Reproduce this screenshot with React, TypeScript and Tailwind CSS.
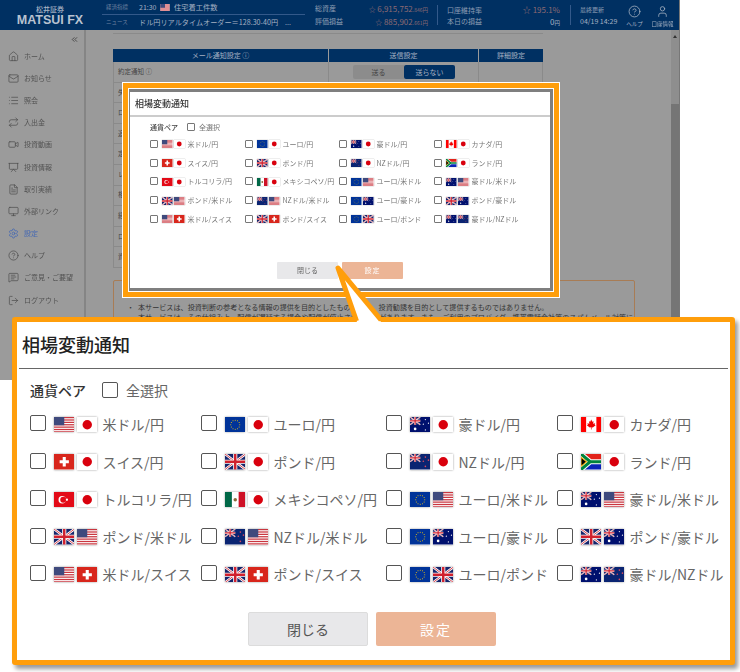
import React from "react";
import { Home, Mail, List, Repeat, Video, Presentation, FileText, Monitor, Settings, CircleHelp, MessageSquareText, LogOut, ChevronsLeft, User } from "lucide-react";

const UKMark = () => (
  <g>
    <rect width="20" height="15" fill="#16246b" />
    <path d="M0 0L20 15M20 0L0 15" stroke="#fff" strokeWidth="2.4" />
    <path d="M0 0L20 15M20 0L0 15" stroke="#d0202e" strokeWidth="0.8" />
    <path d="M10 0V15M0 7.5H20" stroke="#fff" strokeWidth="4" />
    <path d="M10 0V15M0 7.5H20" stroke="#d0202e" strokeWidth="2.4" />
  </g>
);

const Canton = () => (
  <g transform="scale(0.5)">
    <UKMark />
  </g>
);

const dots = (list: number[][], fill: string, r = 0.6) =>
  list.map(([x, y], i) => <circle key={i} cx={x} cy={y} r={r} fill={fill} />);

const flagArt: Record<string, React.ReactNode> = {
  us: (
    <g>
      <rect width="20" height="15" fill="#fff" />
      {[0, 2.3, 4.6, 6.9, 9.2, 11.5, 13.8].map((y) => (
        <rect key={y} y={y} width="20" height="1.2" fill="#c9363f" />
      ))}
      <rect width="10" height="8" fill="#3f4a7d" />
    </g>
  ),
  jp: (
    <g>
      <rect width="20" height="15" fill="#fff" />
      <circle cx="10" cy="7.5" r="4.6" fill="#d9000d" />
    </g>
  ),
  eu: (
    <g>
      <rect width="20" height="15" fill="#003399" />
      {dots(
        Array.from({ length: 12 }, (_, i) => [10 + 4.4 * Math.cos((i * Math.PI) / 6), 7.5 + 4.4 * Math.sin((i * Math.PI) / 6)]),
        "#ffcc00",
        0.5
      )}
    </g>
  ),
  uk: <UKMark />,
  au: (
    <g>
      <rect width="20" height="15" fill="#00106e" />
      <Canton />
      {dots([[5, 11.5]], "#fff", 1.3)}
      {dots([[15, 2.5], [18, 6], [13, 7], [15, 12.5]], "#fff", 0.6)}
    </g>
  ),
  nz: (
    <g>
      <rect width="20" height="15" fill="#0a2472" />
      <Canton />
      {dots([[15, 3], [18, 6], [13, 7], [15, 12]], "#d9495e", 0.8)}
    </g>
  ),
  ch: (
    <g>
      <rect width="20" height="15" fill="#d8261c" />
      <path d="M10 3V12M5.5 7.5H14.5" stroke="#fff" strokeWidth="3" />
    </g>
  ),
  ca: (
    <g>
      <rect width="20" height="15" fill="#fff" />
      <rect width="5" height="15" fill="#f00" />
      <rect x="15" width="5" height="15" fill="#f00" />
      <path d="M10 2.5L11 4.5L12.3 4L11.8 6.5L13.8 6L13.3 7.5L14.3 8L11.5 10.2L10.3 10V12H9.7V10L8.5 10.2L5.7 8L6.7 7.5L6.2 6L8.2 6.5L7.7 4L9 4.5Z" fill="#e00" />
    </g>
  ),
  za: (
    <g>
      <rect width="20" height="7.5" fill="#e2231a" />
      <rect y="7.5" width="20" height="7.5" fill="#0a24b8" />
      <path d="M0 0L9 7.5L0 15M9 7.5H20" stroke="#fff" strokeWidth="5" fill="none" />
      <path d="M0 0L9 7.5L0 15M9 7.5H20" stroke="#00843d" strokeWidth="3" fill="none" />
      <path d="M0 3L5.5 7.5L0 12Z" fill="#000" stroke="#fcb514" strokeWidth="1" />
    </g>
  ),
  tr: (
    <g>
      <rect width="20" height="15" fill="#e30a17" />
      <circle cx="8" cy="7.5" r="3.6" fill="#fff" />
      <circle cx="9" cy="7.5" r="2.9" fill="#e30a17" />
      <circle cx="12.6" cy="7.5" r="1.1" fill="#fff" />
    </g>
  ),
  mx: (
    <g>
      <rect width="20" height="15" fill="#fff" />
      <rect width="6.7" height="15" fill="#006847" />
      <rect x="13.3" width="6.7" height="15" fill="#ce1126" />
      <circle cx="10" cy="7.5" r="1.7" fill="#8c6a3a" />
    </g>
  ),
};

const Flag = ({ code, big }: { code: string; big: boolean }) => (
  <svg
    viewBox="0 0 20 15"
    preserveAspectRatio="none"
    className={big ? "w-[20.5px] h-[15.5px] shrink-0 shadow-[0_0_2px_rgba(0,0,0,0.4)]" : "w-[10.5px] h-[8px] shrink-0 shadow-[0_0_1px_rgba(0,0,0,0.4)]"}
  >
    {flagArt[code]}
  </svg>
);

const pairs: [string, string, string][] = [
  ["us", "jp", "米ドル/円"],
  ["eu", "jp", "ユーロ/円"],
  ["au", "jp", "豪ドル/円"],
  ["ca", "jp", "カナダ/円"],
  ["ch", "jp", "スイス/円"],
  ["uk", "jp", "ポンド/円"],
  ["nz", "jp", "NZドル/円"],
  ["za", "jp", "ランド/円"],
  ["tr", "jp", "トルコリラ/円"],
  ["mx", "jp", "メキシコペソ/円"],
  ["eu", "us", "ユーロ/米ドル"],
  ["au", "us", "豪ドル/米ドル"],
  ["uk", "us", "ポンド/米ドル"],
  ["nz", "us", "NZドル/米ドル"],
  ["eu", "au", "ユーロ/豪ドル"],
  ["uk", "au", "ポンド/豪ドル"],
  ["us", "ch", "米ドル/スイス"],
  ["uk", "ch", "ポンド/スイス"],
  ["eu", "uk", "ユーロ/ポンド"],
  ["au", "nz", "豪ドル/NZドル"],
];

const Check = ({ big }: { big: boolean }) => (
  <span
    className={
      big
        ? "block w-4 h-4 shrink-0 rounded-[2px] border border-[#555] bg-white -mt-[3px]"
        : "block w-2 h-2 shrink-0 rounded-[1px] border-[0.5px] border-[#777] bg-white -mt-[1px]"
    }
  />
);

const PairGrid = ({ big }: { big: boolean }) => (
  <div className={big ? "grid grid-cols-[171px_185px_171px_1fr] auto-rows-[37.5px] mt-[7.75px] ml-[13px]" : "grid grid-cols-[95px_94px_95px_1fr] auto-rows-[18.75px] mt-[3px] ml-[20px]"}>
    {pairs.map(([a, b, label]) => (
      <div key={label} className="flex items-center whitespace-nowrap">
        <Check big={big} />
        <span className={big ? "flex gap-[2.5px] ml-[7.5px]" : "flex gap-[1.5px] ml-[4px]"}>
          <Flag code={a} big={big} />
          <Flag code={b} big={big} />
        </span>
        <span className={big ? "ml-[5.5px] -mt-[1px] text-[14px] leading-none text-[#666]" : "ml-[3px] text-[7px] leading-none text-[#777]"}>{label}</span>
      </div>
    ))}
  </div>
);

const Modal = ({ big }: { big: boolean }) => (
  <div className="h-full bg-white">
    <div className={big ? "h-[47px] mx-[2px] flex items-center pl-[3px] pb-[2px] border-b border-[#666] text-[18px] font-medium text-[#222]" : "h-[25px] flex items-center pl-[5px] pt-[1px] border-b-2 border-[#ccc] text-[9px] font-medium text-[#333]"}>
      相場変動通知
    </div>
    <div className={big ? "flex items-center mt-[13px] ml-[13px] h-4" : "flex items-center mt-[5px] ml-[20px] h-2.5"}>
      <span className={big ? "w-[72px] text-[14px] font-medium leading-none text-[#333]" : "w-[37px] text-[7px] font-medium leading-none text-[#444]"}>通貨ペア</span>
      <span className={big ? "block w-4 h-4 rounded-[2px] border border-[#555]" : "block w-2 h-2 rounded-[1px] border-[0.5px] border-[#777]"} />
      <span className={big ? "ml-2 text-[14px] leading-none text-[#666]" : "ml-1 text-[7px] leading-none text-[#777]"}>全選択</span>
    </div>
    <PairGrid big={big} />
    <div className={big ? "flex gap-2 mt-[18.75px] ml-[231px]" : "flex gap-1 mt-[33px] ml-[147px]"}>
      <div className={big ? "w-[120px] h-[34px] flex items-center justify-center rounded-[2px] bg-[#e8e8ea] border border-[#dcdcdc] text-[14px] text-[#555]" : "w-[61px] h-[17px] flex items-center justify-center rounded-[1px] bg-[#e8e8ea] text-[7px] text-[#666]"}>閉じる</div>
      <div className={big ? "w-[120px] h-[34px] flex items-center justify-center rounded-[2px] bg-[#ecb596] text-[14px] tracking-[2px] text-white" : "w-[61px] h-[17px] flex items-center justify-center rounded-[1px] bg-[#ecb596] text-[7px] tracking-[1px] text-white"}>設定</div>
    </div>
  </div>
);

const navItems: [React.ElementType, string, boolean][] = [
  [Home, "ホーム", false],
  [Mail, "お知らせ", false],
  [List, "照会", false],
  [Repeat, "入出金", false],
  [Video, "投資動画", false],
  [Presentation, "投資情報", false],
  [FileText, "取引実績", false],
  [Monitor, "外部リンク", false],
  [Settings, "設定", true],
  [CircleHelp, "ヘルプ", false],
  [MessageSquareText, "ご意見・ご要望", false],
  [LogOut, "ログアウト", false],
];

const rowLabels = ["約定通知 ⓘ", "失効通知 ⓘ", "ロスカット通知", "追証通知", "定期通知", "レート通知", "相場変動通知", "経済指標通知", "ロット通知", "資産通知"];

const Header = () => (
  <div className="h-[30px] shrink-0 bg-[#003062] flex text-[#8d9db3]">
    <div className="w-[102px] shrink-0 flex flex-col items-center pt-[5px] pr-[2px]">
      <span className="text-[7px] leading-[8px] font-medium text-[#a9b5c6]">松井証券</span>
      <span className="text-[12.5px] leading-[12px] mt-[1px] font-bold text-[#b8c2d0] font-['Liberation_Sans',sans-serif]">MATSUI FX</span>
    </div>
    <div className="w-[203px] shrink-0 text-[7px]">
      <div className="h-[15px] flex items-center border-b border-[#33598a] pl-[4px]">
        <span className="w-[33px] text-[5.5px] text-[#6f83a0]">経済指標</span>
        <span className="w-[21px] text-[#a5b1c2]">21:30</span>
        <svg viewBox="0 0 20 15" className="w-[10px] h-[7px] mr-[4px]">{flagArt.us}</svg>
        <span className="text-[7.25px] text-[#a5b1c2]">住宅着工件数</span>
      </div>
      <div className="h-[15px] flex items-center pl-[4px] whitespace-nowrap">
        <span className="w-[33px] text-[5.5px] text-[#6f83a0]">ニュース</span>
        <span className="text-[7.15px] text-[#a5b1c2]">ドル円リアルタイムオーダー＝128.30-40円</span>
        <span className="ml-[7px] text-[7px] text-[#a5b1c2]">...</span>
      </div>
    </div>
    <div className="w-[132px] shrink-0 pl-[10px] pr-[9px] text-[7px] pt-[2px]">
      <div className="flex justify-between h-[13px] items-center"><span>総資産</span><span className="text-[#8c6a72] whitespace-nowrap">☆ <span className="text-[8px]">6,915,752</span><span className="text-[5px]">.846</span><span className="text-[5.5px]">円</span></span></div>
      <div className="flex justify-between h-[13px] items-center"><span>評価損益</span><span className="text-[#8c6a72] whitespace-nowrap">☆ <span className="text-[8px]">885,902</span><span className="text-[5px]">.661</span><span className="text-[5.5px]">円</span></span></div>
    </div>
    <div className="w-[133px] shrink-0 my-[5px] border-l border-[#33598a] pl-[9px] pr-[10px] text-[7px]">
      <div className="flex justify-between h-[10px] items-center"><span>口座維持率</span><span className="text-[#8c6a72] text-[8px]">☆ 195.1%</span></div>
      <div className="flex justify-between h-[13px] items-center"><span>本日の損益</span><span className="text-[#a5b1c2] text-[8px]">0<span className="text-[5.5px]">円</span></span></div>
    </div>
    <div className="w-[50px] shrink-0 my-[5px] border-l border-[#33598a] pl-[9px] text-[6px] leading-[8px] whitespace-nowrap">
      <div className="mt-[1px]">最終更新</div>
      <div className="text-[7px] mt-[3px] text-[#a5b1c2]">04/19 14:29</div>
    </div>
    <div className="w-[29px] shrink-0 flex flex-col items-center pt-[5px] text-[5.5px] text-[#a5b1c2]">
      <CircleHelp className="w-[13px] h-[13px]" strokeWidth={1.5} />
      <span className="mt-[2px]">ヘルプ</span>
    </div>
    <div className="w-[27px] shrink-0 flex flex-col items-center pt-[5px] text-[5.5px] text-[#a5b1c2] whitespace-nowrap">
      <User className="w-[13px] h-[13px]" strokeWidth={1.5} />
      <span className="mt-[2px]">口座情報</span>
    </div>
  </div>
);

const Sidebar = () => (
  <div className="w-[86px] shrink-0 bg-[#9b9b9b] border-r-2 border-[#858585]">
    <div className="h-[15px] flex justify-end items-center pr-[5px] pt-[3px]">
      <ChevronsLeft className="w-[9px] h-[9px] text-[#333]" />
    </div>
    <div>
      {navItems.map(([Icon, label, active]) => (
        <div key={label} className={active ? "h-[22.2px] flex items-center pl-[8px] text-[#3c63b5]" : "h-[22.2px] flex items-center pl-[8px] text-[#4a4a4a]"}>
          <Icon className="w-[11px] h-[11px] shrink-0" strokeWidth={1.5} />
          <span className="ml-[5px] text-[7px] leading-none whitespace-nowrap text-current opacity-90">{label}</span>
        </div>
      ))}
    </div>
  </div>
);

const Content = () => (
  <div className="flex-1 bg-[#9a9a9a] flex min-w-0">
    <div className="flex-1 pl-[27px] pt-[3px] min-w-0">
      <div className="w-[430px] border-t border-[#8a8a8a] pt-[15px]">
        <div className="flex h-[13px] bg-[#003062] text-[7px] text-[#a5b1c2] text-center leading-[13px]">
          <div className="w-[215px]">メール通知設定 ⓘ</div>
          <div className="w-[150px] border-l border-[#9a9a9a]">送信設定</div>
          <div className="flex-1 border-l border-[#9a9a9a]">詳細設定</div>
        </div>
        {rowLabels.map((label, i) => (
          <div key={label} className="flex h-[20.6px] border-b border-x border-[#8a8a8a] text-[6.5px] text-[#444]">
            <div className="w-[214px] flex items-center pl-[4px]">{label}</div>
            <div className="w-[150px] border-l border-[#8a8a8a] flex items-center pl-[24px] text-[7px]">
              {i === 0 && (
                <>
                  <span className="w-[51px] h-[14px] rounded-l-[2px] bg-[#8c8c8c] text-center leading-[14px]">送る</span>
                  <span className="w-[51px] h-[14px] rounded-[2px] bg-[#003062] text-[#a5b1c2] text-center leading-[14px]">送らない</span>
                </>
              )}
              {i === 1 && (
                <>
                  <span className="w-[51px] h-[14px] rounded-[2px] bg-[#003062] text-[#a5b1c2] text-center leading-[14px]">送る</span>
                  <span className="w-[51px] h-[14px] rounded-r-[2px] bg-[#8c8c8c] text-center leading-[14px]">送らない</span>
                </>
              )}
            </div>
            <div className="flex-1 border-l border-[#8a8a8a]" />
          </div>
        ))}
        <div className="w-[522px] mt-[12px] h-[90px] border border-[#a87c55] rounded-[2px] pl-[13px] pt-[6px] text-[7.1px] leading-[10px] text-[#333] whitespace-nowrap">
          <div className="text-[#8a5a30] text-[7.5px] h-[15px] pl-[11px]">ご利用上のご注意</div>
          <div className="flex"><span className="w-[11px] shrink-0">・</span><span>本サービスは、投資判断の参考となる情報の提供を目的としたものであり、投資勧誘を目的として提供するものではありません。</span></div>
          <div className="flex"><span className="w-[11px] shrink-0">・</span><span>本サービスは、その仕組み上、配信が遅延する場合や配信が停止される場合があります。また、ご利用のプロバイダ、携帯電話会社等のスパムメール対策に</span></div>
        </div>
      </div>
    </div>
    <div className="w-[8px] shrink-0 bg-[#8e8e8e] flex flex-col">
      <div className="h-[74px] flex justify-center pt-[5px]">
        <span className="block w-0 h-0 border-x-[2px] border-x-transparent border-b-[3px] border-b-[#333]" />
      </div>
      <div className="flex-1 bg-[#757575]" />
    </div>
  </div>
);

export default function App() {
  return (
    <div className="relative w-[740px] h-[672px] overflow-hidden bg-white font-['Noto_Sans_CJK_JP','Liberation_Sans',sans-serif]">
      <div className="w-[680px] h-[380px] flex flex-col overflow-hidden border-r border-[#777] blur-[0.35px]">
        <Header />
        <div className="flex-1 flex min-h-0">
          <Sidebar />
          <Content />
        </div>
      </div>

      {/* small framed dialog */}
      <div className="absolute left-[122px] top-[82px] w-[438px] h-[216px] border border-white">
        <div className="h-full border-[5px] border-[#ff9e0b]">
          <div className="h-full border border-white bg-[#7f7f7f] pl-[1px] pr-[3px] pt-[3px] pb-[3px]">
            <div className="h-full blur-[0.25px]">
              <Modal big={false} />
            </div>
          </div>
        </div>
      </div>

      {/* enlarged dialog */}
      <div className="absolute left-[12px] top-[317px] w-[723px] h-[348px] border-[5px] border-[#ff9e0b] rounded-[3px] bg-white shadow-[3px_4px_4px_rgba(0,0,0,0.4)]">
        <Modal big />
      </div>

      {/* callout pointer */}
      <svg className="absolute left-0 top-0 w-[740px] h-[672px] pointer-events-none" viewBox="0 0 740 672">
        <polygon points="338,268 357,322 381,322" fill="#fff" />
        <polyline points="356.5,321 338,268 381,320" fill="none" stroke="#ff9e0b" strokeWidth="5" strokeLinejoin="round" />
      </svg>
    </div>
  );
}
